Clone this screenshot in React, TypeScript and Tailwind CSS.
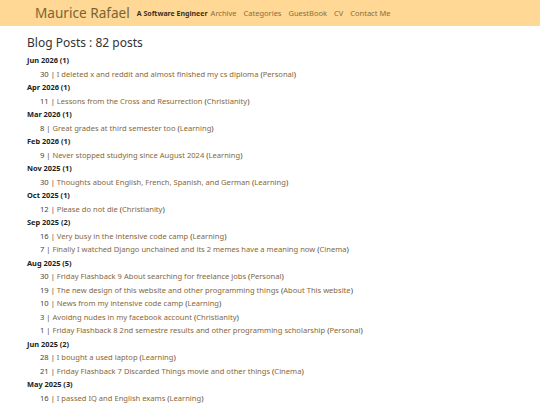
const months = [
  { label: "Jun 2026 (1)", posts: [{ d: 30, t: "I deleted x and reddit and almost finished my cs diploma", c: "Personal" }] },
  { label: "Apr 2026 (1)", posts: [{ d: 11, t: "Lessons from the Cross and Resurrection", c: "Christianity" }] },
  { label: "Mar 2026 (1)", posts: [{ d: 8, t: "Great grades at third semester too", c: "Learning" }] },
  { label: "Feb 2026 (1)", posts: [{ d: 9, t: "Never stopped studying since August 2024", c: "Learning" }] },
  { label: "Nov 2025 (1)", posts: [{ d: 30, t: "Thoughts about English, French, Spanish, and German", c: "Learning" }] },
  { label: "Oct 2025 (1)", posts: [{ d: 12, t: "Please do not die", c: "Christianity" }] },
  {
    label: "Sep 2025 (2)",
    posts: [
      { d: 16, t: "Very busy in the intensive code camp", c: "Learning" },
      { d: 7, t: "Finally I watched Django unchained and its 2 memes have a meaning now", c: "Cinema" },
    ],
  },
  {
    label: "Aug 2025 (5)",
    posts: [
      { d: 30, t: "Friday Flashback 9 About searching for freelance jobs", c: "Personal" },
      { d: 19, t: "The new design of this website and other programming things", c: "About This website" },
      { d: 10, t: "News from my intensive code camp", c: "Learning" },
      { d: 3, t: "Avoidng nudes in my facebook account", c: "Christianity" },
      { d: 1, t: "Friday Flashback 8 2nd semestre results and other programming scholarship", c: "Personal" },
    ],
  },
  {
    label: "Jun 2025 (2)",
    posts: [
      { d: 28, t: "I bought a used laptop", c: "Learning" },
      { d: 21, t: "Friday Flashback 7 Discarded Things movie and other things", c: "Cinema" },
    ],
  },
  {
    label: "May 2025 (3)",
    posts: [{ d: 16, t: "I passed IQ and English exams", c: "Learning" }],
  },
];

const navLinks = ["Archive", "Categories", "GuestBook", "CV", "Contact Me"];

export default function App() {
  return (
    <div className="min-h-screen bg-white text-[#333] font-['Noto_Sans',sans-serif]">
      <header className="h-[26px] bg-[#fed894] flex items-center pl-[35px]">
        <a className="text-[13.6px] text-[#7d6433] leading-none mr-[7px]">Maurice Rafael</a>
        <span className="text-[7px] font-bold text-[#3b3220] mr-[3px] mt-[2px]">A Software Engineer</span>
        <nav className="flex gap-[7px] mt-[2px]">
          {navLinks.map(l => (
            <a key={l} className="text-[7.5px] text-[#8a6d3e]">{l}</a>
          ))}
        </nav>
      </header>

      <main className="pl-[27px] pt-[8px]">
        <h1 className="text-[12px] leading-[18px] text-[#333] mb-[2px]">Blog Posts : 82 posts</h1>
        <div>
          {months.map(m => (
            <div key={m.label}>
              <div className="text-[7.4px] font-bold leading-[13.5px] text-[#222]">{m.label}</div>
              {m.posts.map(p => (
                <div key={p.t} className="pl-[13px] text-[7.58px] leading-[13.5px] text-[#444]">
                  {p.d} | <a className="text-[#86673b]">{p.t}</a> (<a className="text-[#86673b]">{p.c}</a>)
                </div>
              ))}
            </div>
          ))}
        </div>
      </main>
    </div>
  );
}
